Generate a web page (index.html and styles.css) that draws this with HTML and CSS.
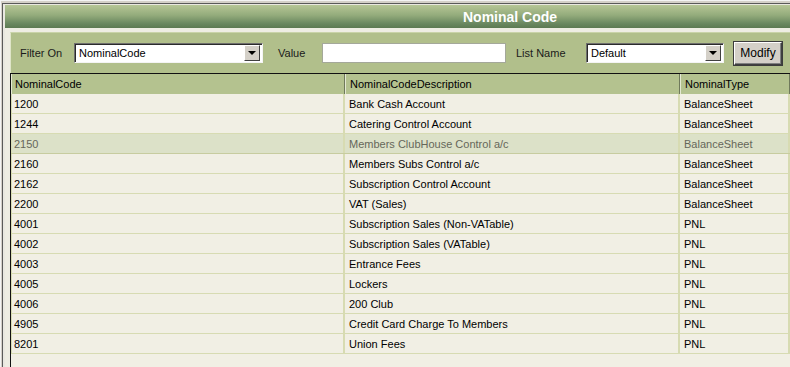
FILE: index.html
```html
<!DOCTYPE html>
<html lang="en">
<head>
    <meta charset="UTF-8">
    <title>Nominal Code</title>
    <link rel="stylesheet" href="styles.css">
</head>
<body>

<div class="window">
    <div class="window-inner">
        <div class="titlebar">Nominal Code</div>

        <div class="content">
            <div class="panel">
                <div class="filters">
                    <span class="lbl lbl-filter">Filter On</span>
                    <div class="combo combo-filter">
                        <span>NominalCode</span>
                        <span class="drop"><i></i></span>
                    </div>
                    <span class="lbl lbl-value">Value</span>
                    <div class="textbox"></div>
                    <span class="lbl lbl-list">List Name</span>
                    <div class="combo combo-list">
                        <span>Default</span>
                        <span class="drop"><i></i></span>
                    </div>
                    <button class="btn">Modify</button>
                </div>

                <div class="grid">
                    <div class="row head">
                        <div class="cell">NominalCode</div>
                        <div class="cell">NominalCodeDescription</div>
                        <div class="cell">NominalType</div>
                    </div>
                    <div id="rows"></div>
                </div>
            </div>
        </div>
    </div>
</div>

<script>
    const codes = [
        ['1200', 'Bank Cash Account', 'BalanceSheet'],
        ['1244', 'Catering Control Account', 'BalanceSheet'],
        ['2150', 'Members ClubHouse Control a/c', 'BalanceSheet', true],
        ['2160', 'Members Subs Control a/c', 'BalanceSheet'],
        ['2162', 'Subscription Control Account', 'BalanceSheet'],
        ['2200', 'VAT (Sales)', 'BalanceSheet'],
        ['4001', 'Subscription Sales (Non-VATable)', 'PNL'],
        ['4002', 'Subscription Sales (VATable)', 'PNL'],
        ['4003', 'Entrance Fees', 'PNL'],
        ['4005', 'Lockers', 'PNL'],
        ['4006', '200 Club', 'PNL'],
        ['4905', 'Credit Card Charge To Members', 'PNL'],
        ['8201', 'Union Fees', 'PNL']
    ];

    const list = document.getElementById('rows');
    codes.forEach(r => {
        const row = document.createElement('div');
        row.className = r[3] ? 'row selected' : 'row';
        row.innerHTML = `<div class="cell">${r[0]}</div><div class="cell">${r[1]}</div><div class="cell">${r[2]}</div>`;
        list.appendChild(row);
    });
</script>
</body>
</html>
```

FILE: styles.css
```css
:root {
    --frame: #d4d0c8;
    --panel: #b1bf8b;
    --row: #f1efe4;
    --row-line: #d7dbb2;
    --selected: #dce1c8;
}

* { box-sizing: border-box; }

body {
    margin: 0;
    background: var(--frame);
    font-family: 'Liberation Sans', Arial, sans-serif;
    font-size: 11px;
    color: #000;
    overflow: hidden;
}

.window {
    height: 367px;
    padding: 2px 0 0 1px;
    border-top: 1px solid #f4f4f4;
    border-left: 1px solid #f4f4f4;
}

.window-inner {
    height: 100%;
    padding: 1px 0 0 2px;
    border-top: 1px solid #5a5a5a;
    border-left: 1px solid #5a5a5a;
    background: #e9e8e0;
    display: flex;
    flex-direction: column;
}

/* Title bar */
.titlebar {
    height: 23px;
    flex: none;
    padding-left: 458px;
    line-height: 24px;
    font-weight: 700;
    font-size: 14px;
    color: #fff;
    background: linear-gradient(#b6c696, #93ab7b 45%, #6a8860 80%, #5c7a52);
}

.content {
    flex: 1;
    padding: 4px 0 0 5px;
    background: #eeede3;
    display: flex;
    min-width: 0;
}

.panel {
    flex: 1;
    min-width: 0;
    background: var(--panel);
    display: flex;
    flex-direction: column;
}

/* Filter row */
.filters {
    height: 41px;
    flex: none;
    display: flex;
    align-items: center;
    padding-left: 9px;
    border-left: 1px solid #dfe5c9;
    border-top: 1px solid #c9d3a8;
}

.lbl { color: #1a1a1a; }
.lbl-filter { width: 54px; }
.lbl-value { width: 44px; margin-left: 15px; }
.lbl-list { width: 70px; margin-left: 10px; }

.combo {
    height: 20px;
    background: #fff;
    border-top: 1px solid #6e6e6e;
    border-left: 1px solid #6e6e6e;
    border-right: 1px solid #f4f4f4;
    border-bottom: 1px solid #f4f4f4;
    box-shadow: inset 1px 1px 0 #2a2a2a;
    display: flex;
    align-items: center;
    justify-content: space-between;
    padding: 0 2px 0 4px;
}

.combo-filter { width: 189px; }
.combo-list { width: 138px; }

.drop {
    width: 16px;
    height: 16px;
    background: var(--frame);
    border-top: 1px solid #fff;
    border-left: 1px solid #fff;
    border-right: 1px solid #404040;
    border-bottom: 1px solid #404040;
    display: flex;
    align-items: center;
    justify-content: center;
}

.drop i {
    width: 0;
    height: 0;
    border-left: 4px solid transparent;
    border-right: 4px solid transparent;
    border-top: 4px solid #000;
}

.textbox {
    width: 184px;
    height: 20px;
    background: #fff;
    border: 1px solid #a4a89a;
}

.btn {
    margin-left: 10px;
    width: 48px;
    height: 23px;
    padding: 0;
    font: inherit;
    font-size: 12px;
    color: #000;
    background: var(--frame);
    border-top: 1px solid #fff;
    border-left: 1px solid #fff;
    border-right: 1px solid #404040;
    border-bottom: 1px solid #404040;
    box-shadow: inset -1px -1px 0 #808080, 0 0 0 1px #3c3c3c;
}

/* Grid */
.grid {
    flex: 1;
    background: var(--row);
    border-top: 1px solid #111;
    border-left: 1px solid #111;
    overflow: hidden;
}

.row {
    display: grid;
    grid-template-columns: 334px 335px 1fr;
    height: 20px;
    border-bottom: 1px solid var(--row-line);
}

.cell {
    display: flex;
    align-items: center;
    padding-left: 4px;
    border-right: 2px solid var(--row-line);
    white-space: nowrap;
    overflow: hidden;
}

.cell:first-child { border-left: 1px solid var(--row-line); padding-left: 2px; }

.head {
    background: #b4c28f;
    border-bottom: 0;
}

.head .cell {
    padding-left: 4px;
    border-left: 1px solid #e4e9d2;
    border-right: 1px solid #6f795b;
}

.head .cell:first-child { padding-left: 3px; }

.row.selected {
    background: var(--selected);
    color: #66675a;
    border-bottom-color: #c7cc9f;
}
```
